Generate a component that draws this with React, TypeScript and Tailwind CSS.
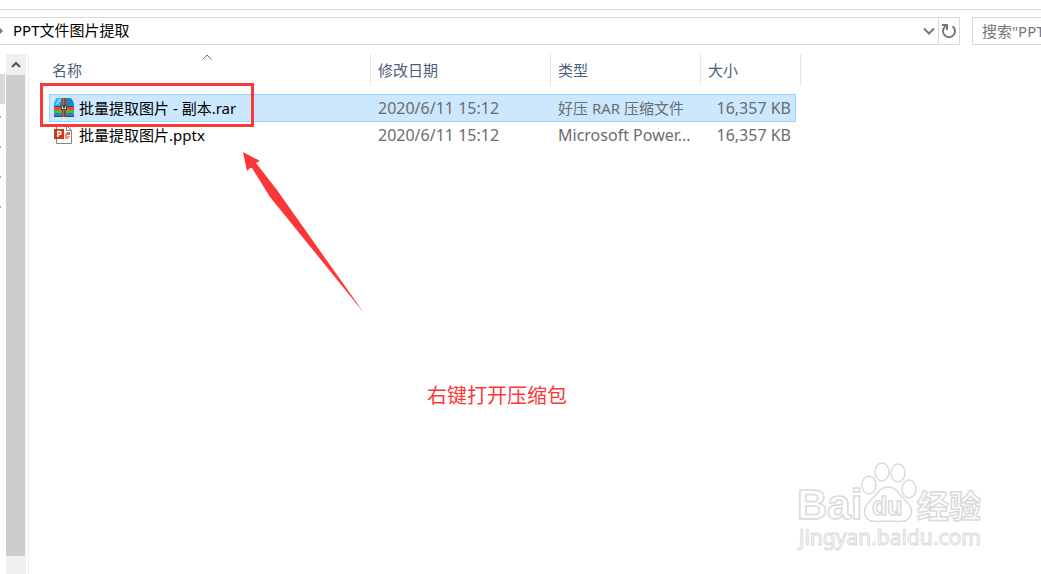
import React, { useState } from 'react'

interface FileItem {
  id: string
  name: string
  modified: string
  type: string
  size: string
  icon: React.ReactNode
}

const ArchiveIcon = () => (
  <svg width="20" height="20" viewBox="0 0 20 20" aria-hidden="true">
    <path d="M4 0h12c2 0 4 4 4 8H0c0-4 2-8 4-8z" fill="#1f86cc" />
    <path d="M4 0h4L6 8H0c0-4 2-8 4-8z" fill="#37b4e6" />
    <path d="M5 1h2L4 6H2z" fill="#8de0f7" />
    <path d="M0 8h20v4H0z" fill="#e0502f" />
    <path d="M0 8h20v1H0z" fill="#28536f" />
    <path d="M0 12h20v3H0z" fill="#62ad45" />
    <path d="M0 15h20v3H0z" fill="#2b86c4" />
    <path d="M0 18h20v1H0z" fill="#2c4b61" />
    <path d="M8 0h4v19H8z" fill="#8c4a30" />
    <path d="M9 0h1v19H9z" fill="#b76a42" />
    <path d="M7 7h6v5H7z" fill="#59443b" />
    <path d="M8 8h4v3H8z" fill="#d8cbb5" />
    <path d="M9 8h2v2H9z" fill="#4c3a33" />
  </svg>
)

const PowerPointIcon = () => (
  <svg width="20" height="20" viewBox="0 0 20 20" aria-hidden="true">
    <path d="M2.500 1.500h11l4 4v13h-15z" fill="#fff" stroke="#858585" />
    <path d="M12.500 1.500v4h5" fill="none" stroke="#858585" />
    <path d="M11 8h2v3h3a4 4 0 0 1-5 3z" fill="#f59273" />
    <path d="M13 7h3v3h-3z" fill="#e8623f" />
    <path d="M0 4h10v10H0z" fill="#c43e1c" />
    <path d="M3.800 12V6.500h1.700a1.500 1.500 0 0 1 0 3H3.800" fill="none" stroke="#fff" strokeWidth="1.500" />
  </svg>
)

const files: FileItem[] = [
  {
    id: 'rar',
    name: '批量提取图片 - 副本.rar',
    modified: '2020/6/11 15:12',
    type: '好压 RAR 压缩文件',
    size: '16,357 KB',
    icon: <ArchiveIcon />,
  },
  {
    id: 'pptx',
    name: '批量提取图片.pptx',
    modified: '2020/6/11 15:12',
    type: 'Microsoft Power...',
    size: '16,357 KB',
    icon: <PowerPointIcon />,
  },
]

// 中文字形较宽，使用小一号字体
const textSize = (text: string) => (/[\u4e00-\u9fff]/.test(text) ? 'text-[15px]' : 'text-[16px]')

const AddressBar = () => (
  <div className="flex h-7 gap-3 text-[15px]">
    <div className="flex min-w-0 flex-1 border border-l-0 border-[#d9d9d9]">
      <nav className="flex flex-1 items-center gap-[10px]">
        <svg width="3" height="6" viewBox="0 0 3 6" aria-hidden="true">
          <path d="M0 0l3 3-3 3z" fill="#777" />
        </svg>
        <a href="#folder" className="pb-0.5 text-black">PPT文件图片提取</a>
      </nav>
      <button type="button" aria-label="展开" className="flex w-[18px] items-center justify-center">
        <svg width="12" height="8" viewBox="0 0 12 8" fill="none" stroke="#777" strokeWidth="2" aria-hidden="true">
          <path d="M1 1.500l5 5 5-5" />
        </svg>
      </button>
      <button type="button" aria-label="刷新" className="flex w-[21px] items-center justify-center border-l border-[#d9d9d9]">
        <svg width="16" height="16" viewBox="0 0 16 16" fill="none" stroke="#777" strokeWidth="2" aria-hidden="true">
          <path d="M11.500 3.300A6 6 0 1 1 4.500 3.300" />
          <path d="M1 2h5v5" />
        </svg>
      </button>
    </div>
    <div className="w-[69px] overflow-hidden border border-r-0 border-[#d9d9d9]">
      <input
        type="text"
        aria-label="搜索"
        placeholder={'搜索"PPT文件图片提取"'}
        className="h-full w-[200px] pl-[9px] placeholder:text-[#777] focus:outline-none"
      />
    </div>
  </div>
)

const NavPane = () => (
  <aside className="flex w-[29px] flex-none border-r border-[#eee] pr-[2px]">
    <div className="flex w-[6px] flex-col pt-5 pr-px">
      <div className="h-[30px] bg-[#d9d9d9]" />
      {['a', 'b', 'c', 'd'].map(key => (
        <div key={key} className="flex h-[30px] items-center pb-1">
          <span className="h-[2px] w-px bg-[#aaa]" />
        </div>
      ))}
    </div>
    <div className="flex w-5 flex-col bg-[#f0f0f0] pb-[18px]">
      <button type="button" aria-label="向上滚动" className="flex h-[21px] items-center justify-center">
        <svg width="10" height="7" viewBox="0 0 10 7" fill="none" stroke="#555" strokeWidth="2" aria-hidden="true">
          <path d="M1 6l4-4 4 4" />
        </svg>
      </button>
      <div className="mr-px flex-1 bg-[#cdcdcd]" />
    </div>
  </aside>
)

const headCell = 'relative h-8 border-r border-[#e5e5e5] p-0 text-left font-normal text-[#4c607a]'

const FileTable = () => {
  const [selected, setSelected] = useState('rar')

  return (
    <table className="w-[757px] table-fixed border-separate border-spacing-0 text-[15px]">
      <colgroup>
        <col className="w-[5px]" />
        <col className="w-[322px]" />
        <col className="w-[180px]" />
        <col className="w-[150px]" />
        <col className="w-[95px]" />
        <col className="w-[5px]" />
      </colgroup>
      <thead>
        <tr>
          <th colSpan={2} className={`${headCell} pl-2`}>
            名称
            <svg className="absolute inset-x-0 top-0 mx-auto" width="10" height="6" viewBox="0 0 10 6" fill="none" stroke="#777" aria-hidden="true">
              <path d="M.5 5.500L5 1l4.500 4.500" />
            </svg>
          </th>
          <th className={`${headCell} pl-[7px]`}>修改日期</th>
          <th className={`${headCell} pl-[7px]`}>类型</th>
          <th colSpan={2} className={`${headCell} pl-[7px]`}>大小</th>
        </tr>
        <tr aria-hidden="true">
          <td colSpan={6} className="h-2 p-0" />
        </tr>
      </thead>
      <tbody>
        {files.map(file => {
          const cell = file.id === selected
            ? 'h-7 border-y border-[#99d1ff] bg-[#cce8ff] p-0'
            : 'h-[26px] border-y border-transparent p-0'
          return (
            <tr key={file.id} onClick={() => setSelected(file.id)} className="text-[#6d6d6d]">
              <td className="p-0" />
              <td className={`${cell} border-l`}>
                <div className="flex items-center gap-[5px] pl-1 text-black">
                  {file.icon}
                  <span>{file.name}</span>
                </div>
              </td>
              <td className={`${cell} pl-[7px] ${textSize(file.modified)}`}>{file.modified}</td>
              <td className={`${cell} pl-[7px] whitespace-nowrap ${textSize(file.type)}`}>{file.type}</td>
              <td className={`${cell} border-r pr-1 text-right whitespace-nowrap ${textSize(file.size)}`}>{file.size}</td>
              <td className="p-0" />
            </tr>
          )
        })}
      </tbody>
    </table>
  )
}

// 水印
const Watermark = () => (
  <svg
    className="pointer-events-none absolute right-[53px] bottom-[18px]"
    width="192"
    height="98"
    viewBox="0 0 192 98"
    fill="#fff"
    stroke="#dadada"
    strokeWidth="1.500"
    aria-hidden="true"
  >
    <g className="font-['Liberation_Sans','Noto_Sans_CJK_SC',sans-serif] font-bold">
      <text x="1" y="61" fontSize="42">Bai</text>
      <text x="121" y="60" fontSize="32">经验</text>
    </g>
    <text x="3" y="87" fontSize="21" strokeWidth="1" className="font-['Noto_Sans',sans-serif]">jingyan.baidu.com</text>
    <path d="M92 29c8 0 10 6 15 11 6 6 10 10 8 17-3 9-13 6-23 6s-20 3-23-6c-2-7 2-11 8-17 5-5 7-11 15-11z" />
    <ellipse cx="73" cy="27" rx="7" ry="9" />
    <ellipse cx="86" cy="14" rx="7" ry="9" />
    <ellipse cx="102" cy="15" rx="7" ry="9" />
    <ellipse cx="113" cy="31" rx="7" ry="9" />
    <text x="76" y="57" fontSize="25" className="font-['Liberation_Sans',sans-serif] font-bold">du</text>
  </svg>
)

const App: React.FC = () => {
  return (
    <div className="flex min-h-screen flex-col overflow-hidden bg-white pt-[9px] font-['Noto_Sans','Noto_Sans_CJK_SC',sans-serif] leading-5">
      <header className="border-t border-[#d9d9d9] pt-[7px] pb-[9px]">
        <AddressBar />
      </header>

      <div className="flex flex-1">
        <NavPane />
        <main className="relative min-w-0 flex-1 pl-[15px]">
          <FileTable />

          {/* 标注 */}
          <div className="pointer-events-none absolute top-[29px] left-[11px] h-[44px] w-[214px] border-3 border-[#fb3838]" />
          <svg className="pointer-events-none absolute top-[97px] left-[213px]" width="122" height="163" viewBox="0 0 122 163" fill="#fb3838" aria-hidden="true">
            <path d="M1 1L18 10L14 12L35 39L122 162L28 46L10 17L8 17L5 20z" />
          </svg>
          <p className="absolute top-[328px] left-[398px] text-xl leading-7 text-[#fb3838]">右键打开压缩包</p>
          <Watermark />
        </main>
      </div>
    </div>
  )
}

export default App
